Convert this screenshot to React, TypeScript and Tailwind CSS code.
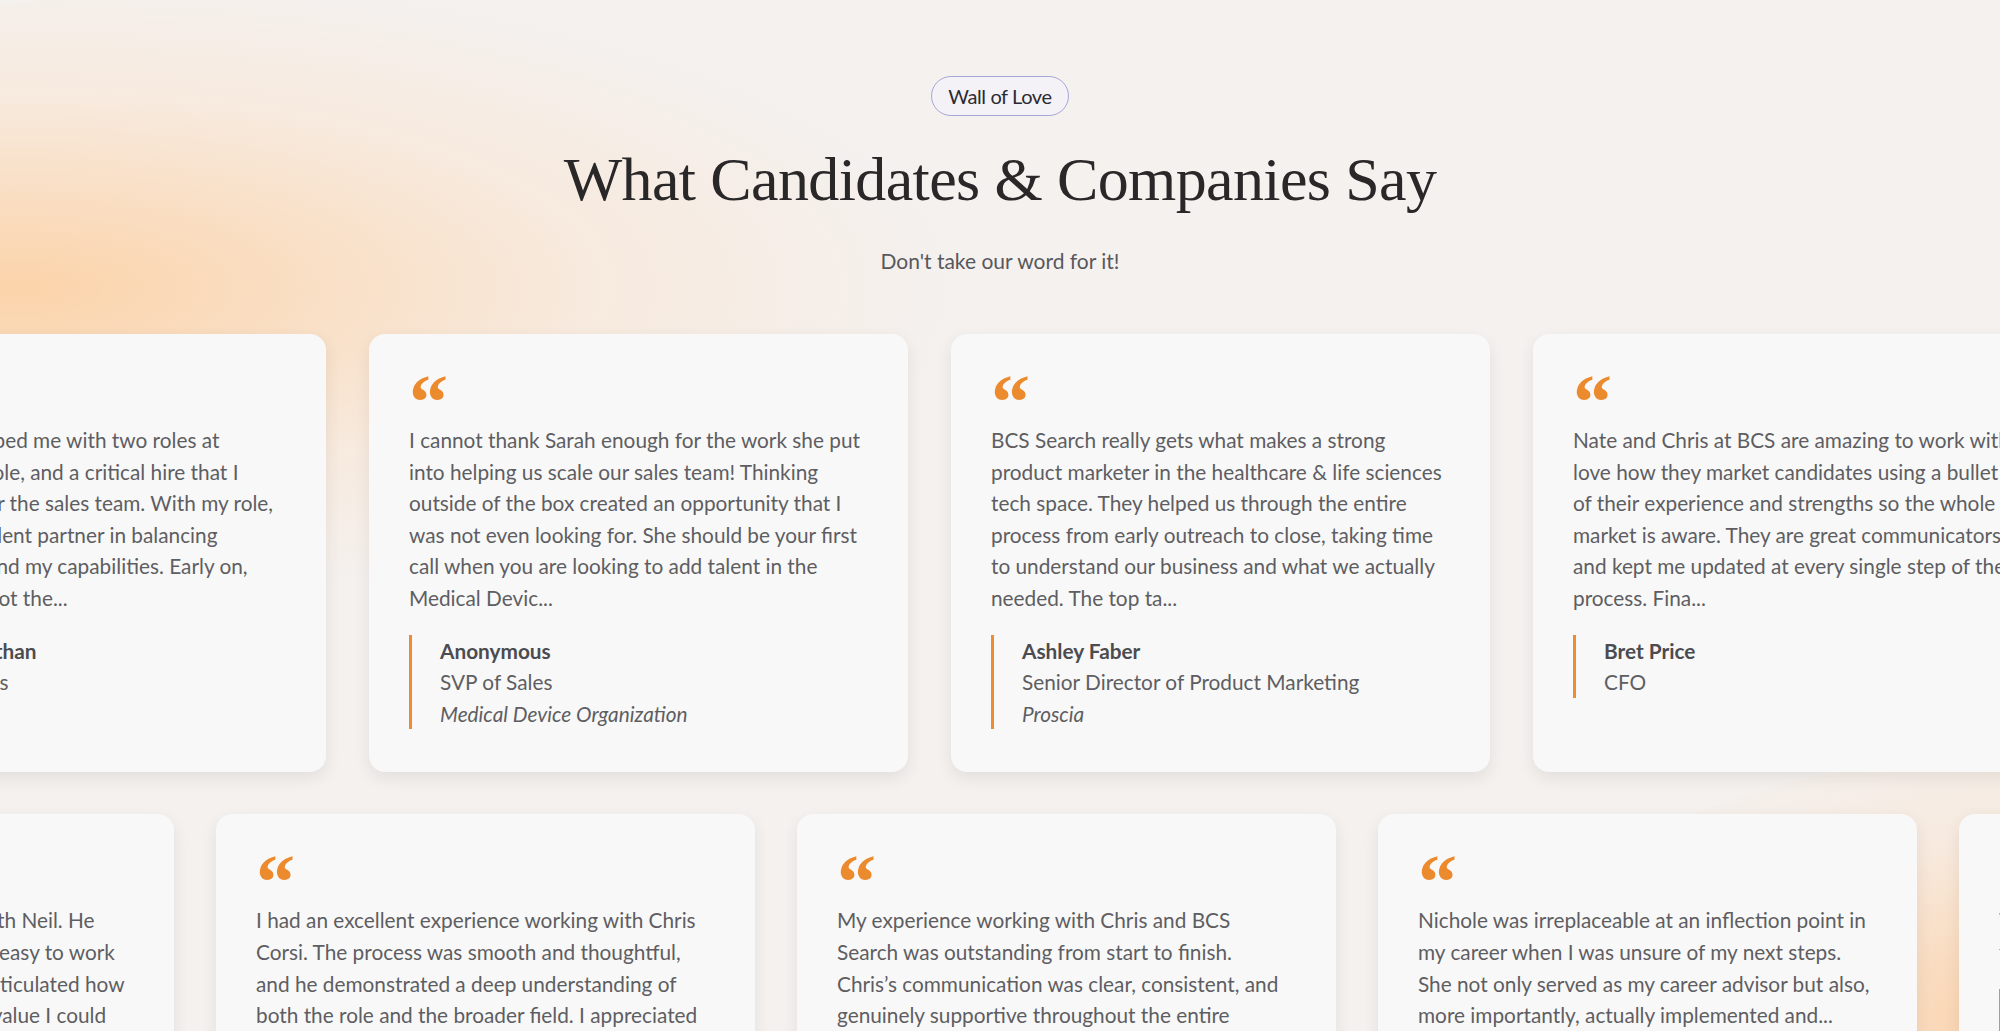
import * as React from 'react';

interface Testimonial {
  body?: string;
  lines?: string[];
  name: string;
  title: string;
  company?: string;
}

const rowOne: Testimonial[] = [
  {
    lines: [
      'Nathan at BCS helped me with two roles at',
      'a new leadership role, and a critical hire that I',
      'needed to make for the sales team. With my role,',
      'Sarah was an excellent partner in balancing',
      'my expectations, and my capabilities. Early on,',
      'we both knew I\u2019d got the...',
    ],
    name: 'Sebastian Jonathan',
    title: 'Director of Sales',
  },
  {
    body: 'I cannot thank Sarah enough for the work she put into helping us scale our sales team! Thinking outside of the box created an opportunity that I was not even looking for. She should be your first call when you are looking to add talent in the Medical Devic...',
    name: 'Anonymous',
    title: 'SVP of Sales',
    company: 'Medical Device Organization',
  },
  {
    body: 'BCS Search really gets what makes a strong product marketer in the healthcare & life sciences tech space. They helped us through the entire process from early outreach to close, taking time to understand our business and what we actually needed. The top ta...',
    name: 'Ashley Faber',
    title: 'Senior Director of Product Marketing',
    company: 'Proscia',
  },
  {
    lines: [
      'Nate and Chris at BCS are amazing to work with. I',
      'love how they market candidates using a bullet list',
      'of their experience and strengths so the whole',
      'market is aware. They are great communicators',
      'and kept me updated at every single step of the',
      'process. Fina...',
    ],
    name: 'Bret Price',
    title: 'CFO',
  },
];

const rowTwo: Testimonial[] = [
  {
    lines: [
      'I had a great experience working with Neil. He',
      'was personable, responsive, and so easy to work',
      'with throughout the job hunt. He articulated how',
      'my background aligned well to the value I could',
      'bring to the team and prepared me for every...',
    ],
    name: 'Daniel Reyes',
    title: 'Account Executive',
  },
  {
    body: 'I had an excellent experience working with Chris Corsi. The process was smooth and thoughtful, and he demonstrated a deep understanding of both the role and the broader field. I appreciated his honesty and the care he took at every st...',
    name: 'Anonymous',
    title: 'Regional Sales Manager',
  },
  {
    body: 'My experience working with Chris and BCS Search was outstanding from start to finish. Chris\u2019s communication was clear, consistent, and genuinely supportive throughout the entire process. He took the time to understand wh...',
    name: 'Anonymous',
    title: 'VP of Marketing',
  },
  {
    body: 'Nichole was irreplaceable at an inflection point in my career when I was unsure of my next steps. She not only served as my career advisor but also, more importantly, actually implemented and...',
    name: 'Anonymous',
    title: 'Director of Operations',
  },
  {
    body: 'Working with BCS Search was a great experience from the first call to the final offer...',
    name: 'Anonymous',
    title: 'Sales Leader',
  },
];

const Card: React.FC<{ t: Testimonial }> = ({ t }) => {
  return (
    <div className="w-[539px] shrink-0 rounded-2xl bg-[#f8f8f8] px-10 pt-[42px] pb-[43px] shadow-[0_6px_16px_rgba(60,40,30,0.09)]">
      {/* 引号 */}
      <div className="h-[24px]">
        <span className="block h-[24px] text-[#ec8a2e] font-['Liberation_Serif',serif] font-bold text-[78px] leading-[78px] -mt-[13px] select-none">
          {'\u201C'}
        </span>
      </div>
      {t.lines ? (
        <p className="mt-[37px] whitespace-nowrap text-[20.8px] leading-[31.6px] text-[#5e5e62]">
          {t.lines.map((l, i) => (
            <React.Fragment key={i}>
              {l}
              {i < t.lines!.length - 1 && <br />}
            </React.Fragment>
          ))}
        </p>
      ) : (
        <p className="mt-[37px] text-[20.8px] leading-[31.6px] text-[#5e5e62]">{t.body}</p>
      )}
      <div className="mt-[21px] border-l-[3px] border-[#ee8b33] pl-7 text-[20.8px] leading-[31.6px]">
        <div className="font-bold text-[#4c4c50]">{t.name}</div>
        <div className="text-[#5e5e62]">{t.title}</div>
        {t.company && <div className="italic text-[#5e5e62]">{t.company}</div>}
      </div>
    </div>
  );
};

export default function App() {
  return (
    <div className="relative h-[1031px] w-full overflow-hidden bg-[#f4f1ef] font-['Lato',sans-serif]">
      {/* 背景光斑 */}
      <div className="pointer-events-none absolute -left-[520px] -top-[10px] h-[620px] w-[1500px] rounded-[50%] bg-[radial-gradient(ellipse_at_36%_48%,rgba(252,208,162,0.9),rgba(250,228,208,0.55)_42%,rgba(244,241,239,0)_70%)]" />
      <div className="pointer-events-none absolute left-[1480px] top-[760px] h-[600px] w-[1000px] rounded-[50%] bg-[radial-gradient(ellipse_at_60%_45%,rgba(252,204,156,0.95),rgba(250,226,205,0.5)_42%,rgba(244,241,239,0)_70%)]" />

      <div className="relative flex flex-col items-center pt-[76px]">
        <span className="flex h-[40px] items-center rounded-full border-[1.5px] border-[#a4a7d6] bg-[#f4f2f6] px-4 text-[20px] tracking-[-0.02em] text-[#2b2b33]">
          Wall of Love
        </span>
        <h1 className="mt-[26px] text-[62px] leading-[74px] tracking-[-0.01em] text-[#2a2729] font-['Liberation_Serif',serif]">
          What Candidates &amp; Companies Say
        </h1>
        <p className="mt-[31px] text-[21px] leading-[28px] text-[#58585c]">Don't take our word for it!</p>
      </div>

      <div className="relative mt-[59px] flex flex-col gap-[42px]">
        <div className="-ml-[213px] flex items-stretch gap-[43px]">
          {rowOne.map((t, i) => (
            <Card key={i} t={t} />
          ))}
        </div>
        <div className="-ml-[365px] flex items-stretch gap-[42px]">
          {rowTwo.map((t, i) => (
            <Card key={i} t={t} />
          ))}
        </div>
      </div>
    </div>
  );
}
